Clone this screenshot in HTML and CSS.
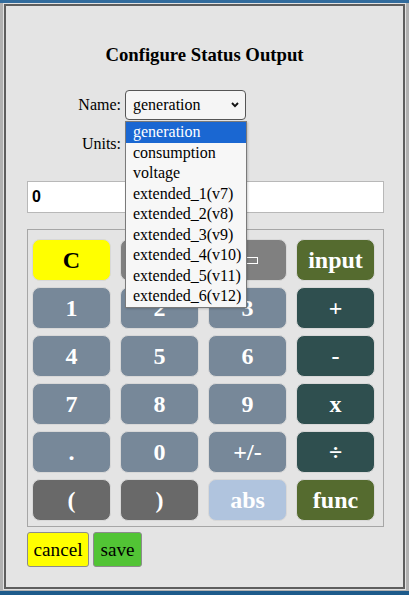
FILE: index.html
```html
<!DOCTYPE html>
<html lang="en">
<head>
<meta charset="utf-8">
<title>Configure Status Output</title>
<link rel="stylesheet" href="styles.css">
</head>
<body>
<div class="topbar"></div>
<div class="stage">
  <div class="dialog">
    <h3 class="title">Configure Status Output</h3>
    <div class="fields">
      <label class="lbl">Name:</label>
      <div class="selwrap">
        <div class="select"><span>generation</span>
          <svg class="chev" width="8" height="6" viewBox="0 0 8 6"><path d="M1 1 L4 4.2 L7 1" fill="none" stroke="#111" stroke-width="1.9"/></svg>
        </div>
        <ul class="dropdown">
          <li class="opt sel">generation</li>
          <li class="opt">consumption</li>
          <li class="opt">voltage</li>
          <li class="opt">extended_1(v7)</li>
          <li class="opt">extended_2(v8)</li>
          <li class="opt">extended_3(v9)</li>
          <li class="opt">extended_4(v10)</li>
          <li class="opt">extended_5(v11)</li>
          <li class="opt">extended_6(v12)</li>
        </ul>
      </div>
      <label class="lbl">Units:</label>
      <div class="selwrap">
        <div class="select"><span></span>
          <svg class="chev" width="8" height="6" viewBox="0 0 8 6"><path d="M1 1 L4 4.2 L7 1" fill="none" stroke="#111" stroke-width="1.9"/></svg>
        </div>
      </div>
    </div>
    <input class="display" type="text" value="0" readonly>
    <div class="keypad">
      <button class="key k-clear">C</button>
      <button class="key k-gray" aria-label="clear entry"></button>
      <button class="key k-gray" aria-label="backspace"><span class="bksp"></span></button>
      <button class="key k-olive">input</button>
      <button class="key k-num">1</button>
      <button class="key k-num">2</button>
      <button class="key k-num">3</button>
      <button class="key k-op">+</button>
      <button class="key k-num">4</button>
      <button class="key k-num">5</button>
      <button class="key k-num">6</button>
      <button class="key k-op">-</button>
      <button class="key k-num">7</button>
      <button class="key k-num">8</button>
      <button class="key k-num">9</button>
      <button class="key k-op">x</button>
      <button class="key k-num">.</button>
      <button class="key k-num">0</button>
      <button class="key k-num">+/-</button>
      <button class="key k-op">÷</button>
      <button class="key k-dim">(</button>
      <button class="key k-dim">)</button>
      <button class="key k-steel">abs</button>
      <button class="key k-olive">func</button>
    </div>
    <div class="actions">
      <button class="act cancel">cancel</button>
      <button class="act save">save</button>
    </div>
  </div>
</div>
<div class="bottombar"></div>
</body>
</html>
```
FILE: styles.css
```css
html, body {
  margin: 0;
  padding: 0;
}
body {
  width: 409px;
  height: 595px;
  display: flex;
  flex-direction: column;
  background: #b1b1b1;
  font-family: "Liberation Serif", "Times New Roman", serif;
  font-size: 16px;
  color: #000;
  overflow: hidden;
}
.topbar {
  flex: none;
  height: 3px;
  background: #326c9d;
}
.bottombar {
  flex: none;
  height: 4px;
  background: #1e5b8b;
}
.stage {
  flex: 1;
  display: flex;
  padding: 1px 4px 2px 4px;
}
.dialog {
  flex: 1;
  display: flex;
  flex-direction: column;
  border: 2px solid #5e5e5e;
  box-shadow: 0 0 0 1px #e2e2e2;
  background: #e4e4e4;
}
.title {
  margin: 38px 0 0;
  font-size: 18.72px;
  line-height: 22px;
  font-weight: bold;
  text-align: center;
}
.fields {
  margin-top: 24px;
  display: grid;
  grid-template-columns: 115px 121px;
  grid-auto-rows: 30px;
  column-gap: 4px;
  row-gap: 9px;
}
.lbl {
  text-align: right;
  line-height: 30px;
}
.selwrap {
  position: relative;
}
.select {
  height: 30px;
  box-sizing: border-box;
  border: 1px solid #555;
  border-radius: 4px;
  background: #f5f5f5;
  padding: 0 6px 0 7px;
  line-height: 28px;
  display: flex;
  justify-content: space-between;
  align-items: center;
}
.chev {
  display: block;
}
.dropdown {
  position: absolute;
  top: 31px;
  left: 0;
  z-index: 2;
  width: 122px;
  box-sizing: border-box;
  margin: 0;
  padding: 0;
  list-style: none;
  border: 1px solid #7a7a7a;
  background: #f7f7f7;
  box-shadow: 1px 1px 2px rgba(0, 0, 0, 0.18);
}
.opt {
  height: 20.56px;
  line-height: 20.56px;
  padding-left: 7px;
  white-space: nowrap;
  overflow: hidden;
}
.opt.sel {
  background: #1a67d2;
  color: #fff;
}
.display {
  margin: 22px 0 0 21px;
  width: 357px;
  height: 32px;
  box-sizing: border-box;
  border: 1px solid #b8b8b8;
  background: #fff;
  padding: 0 0 0 4px;
  font: bold 16px "Liberation Sans", Arial, sans-serif;
  color: #000;
  outline: none;
}
.keypad {
  margin: 16px 0 0 21px;
  width: 357px;
  box-sizing: border-box;
  border: 1px solid #a6a6a6;
  padding: 9px 8px 5px 4px;
  display: grid;
  grid-template-columns: repeat(4, 79px);
  grid-auto-rows: 42px;
  column-gap: 9px;
  row-gap: 6px;
}
.key {
  margin: 0;
  padding: 0;
  border: 1px solid #d8d8d8;
  border-radius: 8px;
  font-family: "Liberation Serif", "Times New Roman", serif;
  font-weight: bold;
  font-size: 24px;
  line-height: 1;
  color: #fff;
  display: flex;
  align-items: center;
  justify-content: center;
}
.k-clear { background: #ffff00; color: #000; }
.k-gray { background: #808080; }
.k-olive { background: #556b2f; }
.k-num { background: #778899; }
.k-op { background: #2f4f4f; }
.k-dim { background: #696969; }
.k-steel { background: #b0c4de; }
.bksp {
  display: block;
  width: 20px;
  height: 7px;
  box-sizing: border-box;
  border: 1.5px solid #fff;
}
.actions {
  margin: 5px 0 0 21px;
  display: flex;
  gap: 4px;
}
.act {
  height: 35px;
  margin: 0;
  padding: 0;
  border: 1px solid #8c8c8c;
  border-radius: 3px;
  font-family: "Liberation Serif", "Times New Roman", serif;
  font-size: 19.2px;
  color: #000;
}
.cancel {
  width: 62px;
  background: #ffff00;
}
.save {
  width: 49px;
  background: #52c435;
}
```
